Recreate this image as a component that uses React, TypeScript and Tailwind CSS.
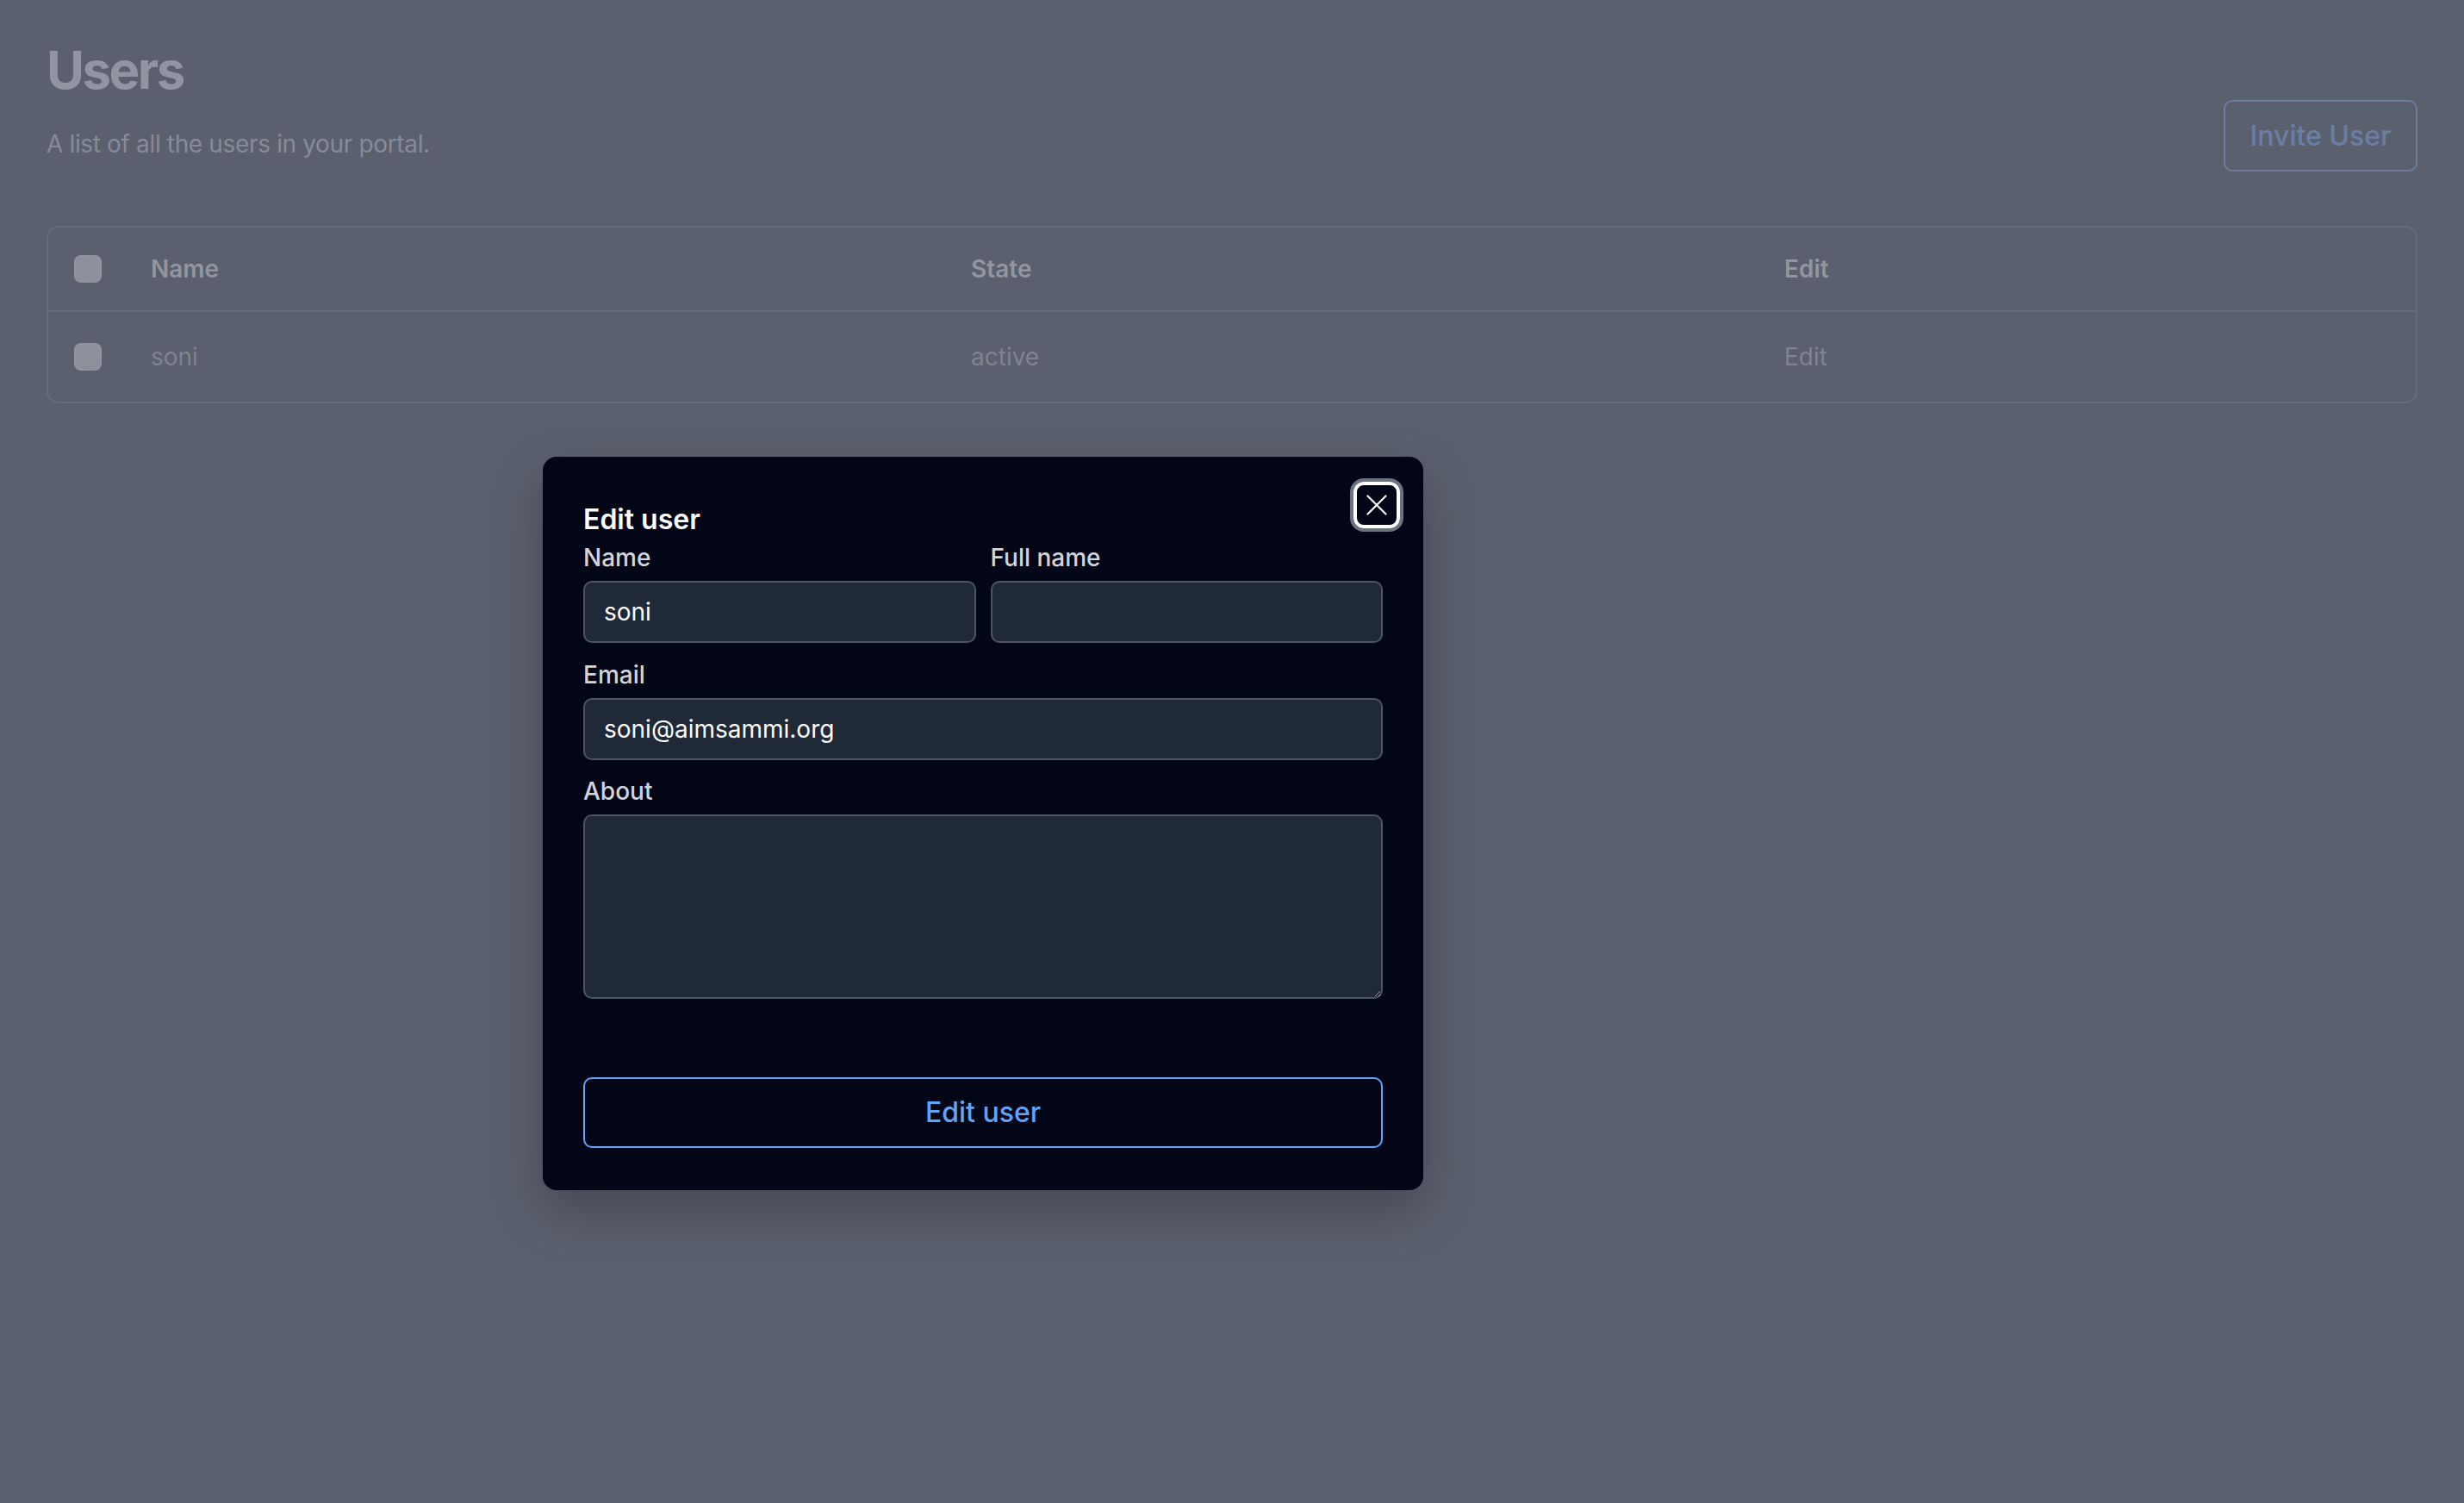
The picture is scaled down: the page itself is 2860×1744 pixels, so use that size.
import { useState } from "react";

interface UserRow {
  id: string;
  name: string;
  state: string;
}

const users: UserRow[] = [{ id: "1", name: "soni", state: "active" }];

// Page under the modal. Colours are already the dimmed tones seen through the backdrop.
function UsersPage() {
  return (
    <div className="px-[54px] pt-[45px]">
      <div className="flex items-start justify-between">
        <div>
          <h1 className="text-[60px] leading-[72px] font-bold tracking-[-2.5px] text-[#9195a1]">
            Users
          </h1>
          <p className="mt-[30px] text-[28px] leading-[40px] tracking-[-0.35px] text-[#878b97]">
            A list of all the users in your portal.
          </p>
        </div>
        <button className="mt-[71px] h-[83px] w-[225px] rounded-[10px] border-2 border-[#6b7ea2] text-[32px] font-medium text-[#6b7fa4]">
          Invite User
        </button>
      </div>

      <div className="mt-[63px] rounded-[14px] border-2 border-[#676c7a]">
        <div className="grid h-[96px] grid-cols-[119px_952px_944px_1fr] items-center text-[28px] font-semibold text-[#9296a1]">
          <div className="pl-[30px]">
            <Checkbox />
          </div>
          <div>Name</div>
          <div>State</div>
          <div>Edit</div>
        </div>
        {users.map((u) => (
          <div
            key={u.id}
            className="grid h-[106px] grid-cols-[119px_952px_944px_1fr] items-center border-t-2 border-[#676c7a] text-[28px] text-[#7f8490]"
          >
            <div className="pl-[30px]">
              <Checkbox />
            </div>
            <div>{u.name}</div>
            <div>{u.state}</div>
            <div>Edit</div>
          </div>
        ))}
      </div>
    </div>
  );
}

function Checkbox() {
  return <div className="h-[32px] w-[32px] rounded-[8px] border-2 border-[#9094a0] bg-[#8c909b]" />;
}

function Field({ label, children }: { label: string; children: React.ReactNode }) {
  return (
    <div>
      <label className="block text-[28px] leading-[40px] font-medium text-[#d1d5db]">{label}</label>
      <div className="mt-[7px]">{children}</div>
    </div>
  );
}

const inputCls =
  "block h-[72px] w-full rounded-[10px] border-2 border-[#4b5563] bg-[#1f2937] px-[22px] text-[28px] text-white outline-none";

function EditUserModal() {
  const [name, setName] = useState("soni");
  const [fullName, setFullName] = useState("");
  const [email, setEmail] = useState("soni@aimsammi.org");
  const [about, setAbout] = useState("");

  return (
    <div className="absolute left-[630px] top-[530px] w-[1022px] rounded-[16px] bg-[#020617] px-[47px] pt-[49px] pb-[49px] shadow-[0_24px_60px_rgba(0,0,0,0.25)]">
      <button className="absolute right-[27px] top-[29px] flex h-[54px] w-[54px] items-center justify-center rounded-[12px] border-[4px] border-white ring-[4px] ring-[#6b7280]">
        <svg viewBox="0 0 24 24" className="h-[46px] w-[46px]" fill="none" stroke="white" strokeWidth={1.1} strokeLinecap="round">
          <path d="M6.5 17.5 17.5 6.5M6.5 6.5l11 11" />
        </svg>
      </button>

      <h2 className="text-[32px] leading-[48px] font-semibold text-white">Edit user</h2>

      <div className="grid grid-cols-2 gap-x-[17px]">
        <Field label="Name">
          <input className={inputCls} value={name} onChange={(e) => setName(e.target.value)} />
        </Field>
        <Field label="Full name">
          <input className={inputCls} value={fullName} onChange={(e) => setFullName(e.target.value)} />
        </Field>
      </div>

      <div className="mt-[17px]">
        <Field label="Email">
          <input className={inputCls} value={email} onChange={(e) => setEmail(e.target.value)} />
        </Field>
      </div>

      <div className="mt-[16px]">
        <Field label="About">
          <textarea
            className="block h-[214px] w-full rounded-[10px] border-2 border-[#4b5563] bg-[#1f2937] px-[22px] py-[14px] text-[28px] text-white outline-none [color-scheme:dark]"
            value={about}
            onChange={(e) => setAbout(e.target.value)}
          />
        </Field>
      </div>

      <button className="mt-[91px] h-[82px] w-full rounded-[10px] border-2 border-[#60a5fa] text-[32px] font-medium text-[#60a5fa]">
        Edit user
      </button>
    </div>
  );
}

export default function App() {
  return (
    <div className="relative min-h-[1744px] w-full bg-[#5b606e] font-['Inter',sans-serif]">
      <UsersPage />
      <EditUserModal />
    </div>
  );
}
